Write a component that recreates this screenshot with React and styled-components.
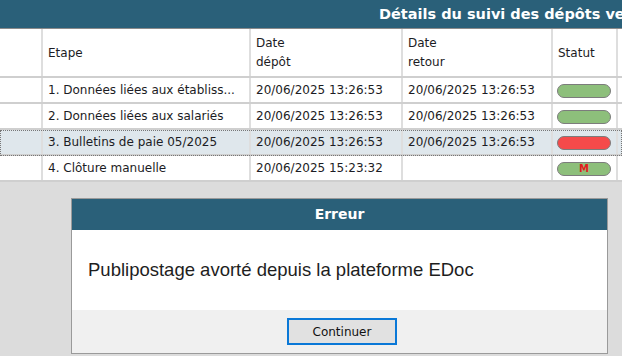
import React from 'react'
import styled, { createGlobalStyle } from 'styled-components'

const GlobalStyle = createGlobalStyle`
  html, body {
    margin: 0;
    padding: 0;
  }
  body {
    font-family: "DejaVu Sans", Tahoma, sans-serif;
  }
`;

const Page = styled.div`
  width: 622px;
  height: 356px;
  overflow: hidden;
  background: #dcdcdc;
`;

const TitleBar = styled.div`
  height: 28px;
  background: #2a6079;
  border-bottom: 1px solid #8a8a8a;
  color: #fff;
  font-weight: bold;
  font-size: 14.5px;
  line-height: 28px;
  white-space: nowrap;
  overflow: hidden;
  padding-left: 379px;
`;

const Row = styled.div`
  display: grid;
  grid-template-columns: 43px 208px 152px 150px 65px 1fr;
  height: ${(p) => (p.head ? '49px' : '26px')};
  box-sizing: border-box;
  border-bottom: 2px solid #cfcfcf;
  background: ${(p) => (p.selected ? '#dfe7ec' : '#fff')};
  outline: ${(p) => (p.selected ? '1px dotted #777' : 'none')};
  outline-offset: -1px;
  font-size: 12px;
  color: #1c1c24;
`;

const Cell = styled.div`
  box-sizing: border-box;
  border-right: 2px solid #dedede;
  padding: 1px 5px 0;
  display: flex;
  align-items: center;
  white-space: nowrap;
  overflow: hidden;
  line-height: 19px;
`;

const Pill = styled.div`
  width: 56px;
  height: 12px;
  border: 1px solid #7c7c7c;
  border-radius: 8px;
  background: ${(p) => (p.red ? '#f54a4a' : '#8dbf7b')};
  color: #e21d1d;
  font-size: 10px;
  font-weight: bold;
  line-height: 12px;
  text-align: center;
  margin-left: -1px;
`;

const Dialog = styled.div`
  width: 537px;
  margin: 16px 0 0 71px;
  border: 1px solid #9a9a9a;
  box-sizing: border-box;
  background: #fff;
`;

const DialogHead = styled.div`
  height: 31px;
  background: #2a6079;
  color: #fff;
  font-weight: bold;
  font-size: 14px;
  line-height: 31px;
  text-align: center;
`;

const DialogBody = styled.div`
  height: 80px;
  padding-left: 16px;
  display: flex;
  align-items: center;
  font-family: "Liberation Sans", Arial, sans-serif;
  font-size: 18.5px;
  color: #1e1e1e;
`;

const DialogFoot = styled.div`
  height: 43px;
  background: #f0f0f0;
  display: flex;
  justify-content: center;
  align-items: flex-start;
  padding-top: 8px;
  box-sizing: border-box;
`;

const Button = styled.button`
  width: 110px;
  height: 27px;
  margin-left: 5px;
  background: #e1e1e1;
  border: 2px solid #0a78d7;
  font-family: "DejaVu Sans", Tahoma, sans-serif;
  font-size: 12px;
  color: #111;
  padding: 0;
`;

const rows = [
  { etape: '1. Données liées aux établiss...', depot: '20/06/2025 13:26:53', retour: '20/06/2025 13:26:53' },
  { etape: '2. Données liées aux salariés', depot: '20/06/2025 13:26:53', retour: '20/06/2025 13:26:53' },
  { etape: '3. Bulletins de paie 05/2025', depot: '20/06/2025 13:26:53', retour: '20/06/2025 13:26:53', red: true, selected: true },
  { etape: '4. Clôture manuelle', depot: '20/06/2025 15:23:32', retour: '', label: 'M' },
]

export default function App() {
  return (
    <Page>
      <GlobalStyle />
      <TitleBar>Détails du suivi des dépôts vers la plateforme EDoc</TitleBar>
      <Row head>
        <Cell />
        <Cell>Etape</Cell>
        <Cell>Date<br />dépôt</Cell>
        <Cell>Date<br />retour</Cell>
        <Cell>Statut</Cell>
        <Cell />
      </Row>
      {rows.map((r) => (
        <Row key={r.etape} selected={r.selected}>
          <Cell />
          <Cell>{r.etape}</Cell>
          <Cell>{r.depot}</Cell>
          <Cell>{r.retour}</Cell>
          <Cell><Pill red={r.red}>{r.label}</Pill></Cell>
          <Cell />
        </Row>
      ))}
      <Dialog>
        <DialogHead>Erreur</DialogHead>
        <DialogBody>Publipostage avorté depuis la plateforme EDoc</DialogBody>
        <DialogFoot>
          <Button>Continuer</Button>
        </DialogFoot>
      </Dialog>
    </Page>
  )
}
